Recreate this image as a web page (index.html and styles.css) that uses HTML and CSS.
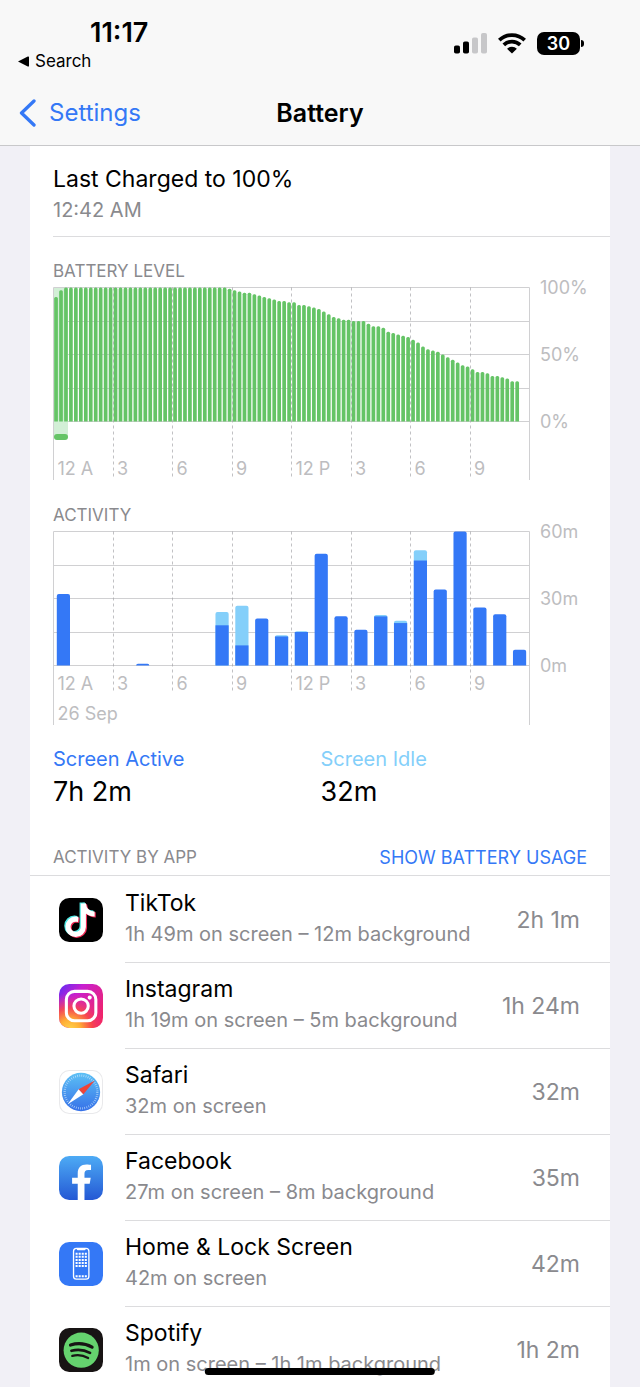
FILE: index.html
```
<!DOCTYPE html>
<html lang="en">
<head>
<meta charset="utf-8">
<meta name="viewport" content="width=device-width, initial-scale=1">
<title>Battery</title>
<link rel="stylesheet" href="styles.css">
</head>
<body>
<header class="top">
  <div class="status">
    <div class="status-left">
      <time class="clock">11:17</time>
      <a class="return" href="#"><svg width="11" height="11" viewBox="0 0 11 11" aria-hidden="true"><path d="M0 5.500L9.800.6Q11 0 11 1.300V9.700Q11 11 9.800 10.400Z"/></svg>Search</a>
    </div>
    <div class="status-right">
      <svg width="33" height="21" viewBox="0 0 33 21" role="img" aria-label="Signal"><rect y="12.500" width="6" height="8" rx="1.800"/><rect x="9" y="8.500" width="6" height="12" rx="1.800"/><g fill="#c7c7c9"><rect x="18" y="4.500" width="6" height="16" rx="1.800"/><rect x="27" width="6" height="20.500" rx="1.800"/></g></svg>
      <svg width="28" height="21" viewBox="0 0 28 21" role="img" aria-label="Wi-Fi"><g fill="none" stroke="#000" stroke-width="3.700"><path d="M1.300 7.200A18.200 18.200 0 0 1 26.700 7.200"/><path d="M5.800 11.900A11.700 11.700 0 0 1 22.200 11.900"/></g><path d="M14 20.600L9.100 15.800A7 7 0 0 1 18.900 15.800Z"/></svg>
      <span class="battery"><span class="battery-body">30</span><span class="battery-tip"></span></span>
    </div>
  </div>
  <nav class="nav">
    <a class="back" href="#"><svg width="17" height="28" viewBox="0 0 17 28" aria-hidden="true"><path d="M15 2L2.500 14L15 26" fill="none" stroke="#3478f6" stroke-width="3.300" stroke-linecap="round" stroke-linejoin="round"/></svg>Settings</a>
    <h1>Battery</h1>
  </nav>
</header>

<main class="scroll">
  <div class="card">
    <section class="charged">
      <h2>Last Charged to 100%</h2>
      <p>12:42 AM</p>
    </section>

    <section class="chart">
      <h3>BATTERY LEVEL</h3>
      <svg id="level" viewBox="0 0 557 200" role="img" aria-label="Battery level over the day"></svg>
    </section>
    <section class="chart activity">
      <h3>ACTIVITY</h3>
      <svg id="activity" viewBox="0 0 557 200" role="img" aria-label="Screen activity over the day"></svg>
    </section>

    <dl class="totals">
      <div><dt class="active">Screen Active</dt><dd>7h 2m</dd></div>
      <div><dt class="idle">Screen Idle</dt><dd>32m</dd></div>
    </dl>

    <section>
      <div class="apps-head">
        <h3>ACTIVITY BY APP</h3>
        <button type="button">SHOW BATTERY USAGE</button>
      </div>
      <ul class="apps">
        <li>
          <svg class="icon" viewBox="0 0 43 43" aria-hidden="true"><rect width="43" height="43" rx="10"/><g fill="none" stroke-width="5"><path stroke="#4de8e4" d="M23.500 5V28A7.500 7.500 0 1 1 16 20.300L18.500 20.600M23.500 5C24 11 28 15.300 34.500 15.300" transform="translate(-.9 -.6)"/><path stroke="#f02b56" d="M23.500 5V28A7.500 7.500 0 1 1 16 20.300L18.500 20.600M23.500 5C24 11 28 15.300 34.500 15.300" transform="translate(1.400 1.200)"/><path stroke="#fff" d="M23.500 5V28A7.500 7.500 0 1 1 16 20.300L18.500 20.600M23.500 5C24 11 28 15.300 34.500 15.300" transform="translate(.3 .3)"/></g></svg>
          <div class="row"><div class="info"><h4>TikTok</h4><p>1h 49m on screen – 12m background</p></div><span class="time">2h 1m</span></div>
        </li>
        <li>
          <svg class="icon" viewBox="0 0 43 43" aria-hidden="true"><defs><linearGradient id="igBase" x1="0" y1="0" x2="1" y2=".8"><stop offset="0" stop-color="#5b2cf5"/><stop offset=".35" stop-color="#c81fd0"/><stop offset="1" stop-color="#f5245c"/></linearGradient><radialGradient id="igGlow" cx=".25" cy="1.050" r=".85"><stop offset="0" stop-color="#ffd84d"/><stop offset=".3" stop-color="#ffab35"/><stop offset=".6" stop-color="#fa4a45" stop-opacity=".85"/><stop offset="1" stop-color="#e32aa0" stop-opacity="0"/></radialGradient></defs><rect width="43" height="43" rx="10" fill="url(#igBase)"/><rect width="43" height="43" rx="10" fill="url(#igGlow)"/><g fill="none" stroke="#fff" stroke-width="3"><rect x="7.200" y="7.200" width="28.800" height="28.800" rx="8"/><circle cx="21.600" cy="21.600" r="7"/></g><circle cx="30" cy="13.300" r="2" fill="#fff"/></svg>
          <div class="row"><div class="info"><h4>Instagram</h4><p>1h 19m on screen – 5m background</p></div><span class="time">1h 24m</span></div>
        </li>
        <li>
          <svg class="icon" viewBox="0 0 43 43" aria-hidden="true"><defs><linearGradient id="sf" x2="0" y2="1"><stop stop-color="#5cc0f5"/><stop offset="1" stop-color="#3671e8"/></linearGradient></defs><rect x=".5" y=".5" width="42" height="42" rx="9.500" fill="#fff" stroke="#e9e9eb"/><circle cx="21.500" cy="21.500" r="18.700" fill="url(#sf)"/><circle cx="21.500" cy="21.500" r="16" fill="none" stroke="#d5ebff" stroke-opacity=".75" stroke-width="2.200" stroke-dasharray=".7 1.394"/><path fill="#fff" d="M8.500 33.500L19.200 18.800L23.800 23.700Z"/><path fill="#f04438" d="M35 10.300L19.200 18.800L23.800 23.700Z"/></svg>
          <div class="row"><div class="info"><h4>Safari</h4><p>32m on screen</p></div><span class="time">32m</span></div>
        </li>
        <li>
          <svg class="icon" viewBox="0 0 43 43" aria-hidden="true"><defs><linearGradient id="fb" x2="0" y2="1"><stop stop-color="#4dabf5"/><stop offset="1" stop-color="#2458d4"/></linearGradient></defs><rect width="43" height="43" rx="10" fill="url(#fb)"/><path fill="#fff" d="M18.300 43V27H12.800V21.300H18.300V17C18.300 11 21.500 8.200 26.800 8.200C28.800 8.200 30.500 8.400 31.300 8.600V13.600H28.500C25.800 13.600 24.900 14.900 24.900 17.300V21.300H31L30 27H24.900V43Z"/></svg>
          <div class="row"><div class="info"><h4>Facebook</h4><p>27m on screen – 8m background</p></div><span class="time">35m</span></div>
        </li>
        <li>
          <svg class="icon" viewBox="0 0 43 43" aria-hidden="true"><rect width="43" height="43" rx="10" fill="#3478f6"/><rect x="14.200" y="6.300" width="15" height="30" rx="2.800" fill="none" stroke="#fff" stroke-width="1.300"/><path fill="#fff" d="M17.300 6h8.800v.8q0 1.200-1.200 1.200h-6.400q-1.200 0-1.200-1.200z"/><g stroke="#fff" stroke-width="2" stroke-dasharray="2 1"><path d="M16.200 11.500h11M16.200 14.500h11M16.200 17.500h11M16.200 20.500h11M16.200 23.500h11M16.200 33.500h11"/></g></svg>
          <div class="row"><div class="info"><h4>Home &amp; Lock Screen</h4><p>42m on screen</p></div><span class="time">42m</span></div>
        </li>
        <li>
          <svg class="icon" viewBox="0 0 43 43" aria-hidden="true"><rect width="43" height="43" rx="10" fill="#181414"/><circle cx="21.700" cy="21.700" r="17.200" fill="#65d36e"/><g fill="none" stroke="#181414" stroke-linecap="round"><path d="M11.300 16.600Q22.500 13.300 32.300 18.700" stroke-width="3.200"/><path d="M12.200 22.200Q21.800 19.600 30.300 24.300" stroke-width="2.700"/><path d="M13 27.300Q21 25.200 28.500 29.300" stroke-width="2.200"/></g></svg>
          <div class="row"><div class="info"><h4>Spotify</h4><p>1m on screen – 1h 1m background</p></div><span class="time">1h 2m</span></div>
        </li>
      </ul>
    </section>
  </div>
</main>
<div class="home-bar"></div>
<script src="charts.js"></script>
</body>
</html>
```

FILE: styles.css
```
* {
  box-sizing: border-box;
}

body {
  margin: 0;
  height: 100vh;
  display: flex;
  flex-direction: column;
  overflow: hidden;
  background: #f1f0f6;
  color: #000;
  font-family: Inter, "Liberation Sans", sans-serif;
}

h1, h2, h3, h4, p, dl, dd, ul {
  margin: 0;
  padding: 0;
  font-weight: 400;
}

a {
  color: inherit;
  text-decoration: none;
}

svg {
  display: block;
}

.top {
  flex: none;
  background: #f8f8f8;
  border-bottom: 1px solid #c8c8ca;
}

.status {
  display: flex;
  justify-content: space-between;
  padding: 18px 56px 0 18px;
  height: 80px;
}

.status-left {
  display: flex;
  flex-direction: column;
}

.clock {
  padding-left: 72px;
  font-size: 27px;
  font-weight: 600;
  line-height: 30px;
}

.return {
  display: flex;
  align-items: center;
  gap: 6px;
  font-size: 17px;
  font-weight: 400;
  line-height: 26px;
}

.status-right {
  display: flex;
  align-items: center;
  gap: 11px;
  height: 50px;
}

.battery {
  display: flex;
  align-items: center;
  gap: 1px;
}

.battery-body {
  width: 43px;
  border-radius: 7px;
  background: #000;
  color: #fff;
  font-size: 18px;
  font-weight: 600;
  line-height: 23px;
  text-align: center;
}

.battery-tip {
  width: 3px;
  height: 7px;
  border-radius: 0 3px 3px 0;
  background: #000;
}

.nav {
  display: grid;
  grid-template-columns: 1fr auto 1fr;
  align-items: center;
  height: 65px;
  padding: 0 19px;
}

.back {
  display: flex;
  align-items: center;
  gap: 13px;
  color: #3478f6;
  font-size: 24px;
}

.nav h1 {
  font-size: 25px;
  font-weight: 600;
}

.scroll {
  flex: 1;
  min-height: 0;
  overflow-y: auto;
  scrollbar-width: none;
  padding: 0 30px;
}

.card {
  background: #fff;
}

.charged {
  margin-left: 23px;
  padding: 17px 0 10px;
  border-bottom: 1px solid #dcdcde;
}

.charged h2 {
  font-size: 23px;
  line-height: 32px;
}

.charged p {
  color: #8a8a8e;
  font-size: 20px;
  line-height: 31px;
}

.chart {
  padding: 24px 0 0 23px;
}

.chart.activity {
  padding-top: 23px;
}

h3 {
  color: #8a8a8e;
  font-size: 17px;
  line-height: 21px;
}

.chart svg {
  width: 100%;
  overflow: visible;
}

.chart text {
  fill: #bdbdc0;
  font-size: 18px;
}

.grid {
  stroke: #d0d0d2;
}

.hour {
  stroke: #a0a0a4;
  stroke-opacity: 0.65;
  stroke-dasharray: 3 3;
}

.level-bar {
  fill: #65c466;
}

.charging {
  fill: #d2efd6;
}

.active-bar {
  fill: #3478f6;
}

.idle-bar {
  fill: #84cffa;
}

.totals {
  display: grid;
  grid-template-columns: 1fr 1fr;
  padding: 18px 22px 0 23px;
}

.totals dt {
  font-size: 20px;
  line-height: 30px;
}

.totals dd {
  font-size: 27px;
  line-height: 36px;
}

.active {
  color: #3478f6;
}

.idle {
  color: #84cffa;
}

.apps-head {
  display: flex;
  justify-content: space-between;
  align-items: center;
  margin-top: 30px;
  padding: 0 23px 0 23px;
  height: 36px;
  border-bottom: 1px solid #dcdcde;
}

.apps-head button {
  padding: 0;
  border: 0;
  background: none;
  color: #3478f6;
  font: inherit;
  font-size: 18px;
}

.apps {
  padding-top: 1px;
  list-style: none;
}

.apps li {
  display: flex;
  align-items: center;
  gap: 22px;
  padding-left: 29px;
}

.icon {
  flex: none;
  width: 44px;
  height: 44px;
}

.row {
  flex: 1;
  display: flex;
  align-items: center;
  justify-content: space-between;
  height: 86px;
  padding-right: 30px;
  border-bottom: 1px solid #dcdcde;
}

.info {
  padding-bottom: 4px;
}

.info h4 {
  font-size: 23px;
  line-height: 32px;
}

.info p {
  color: #8a8a8e;
  font-size: 20px;
  line-height: 30px;
}

.time {
  color: #8a8a8e;
  font-size: 23px;
}

.home-bar {
  position: fixed;
  bottom: 12px;
  left: 50%;
  width: 36%;
  height: 7px;
  border-radius: 4px;
  background: #000;
  transform: translateX(-50%);
}
```

FILE: charts.js
```
const NS = "http://www.w3.org/2000/svg";
const LEFT = 0.5, RIGHT = 476.5, TOP = 5.5, BASE = 139.5;
const SPAN = RIGHT - LEFT, RISE = BASE - TOP;

function add(svg, tag, attrs, text) {
  const el = document.createElementNS(NS, tag);
  for (const key in attrs) el.setAttribute(key, attrs[key]);
  if (text) el.textContent = text;
  svg.appendChild(el);
}

function line(svg, cls, x1, y1, x2, y2) {
  add(svg, "line", { class: cls, x1, y1, x2, y2 });
}

function drawGrid(svg, axisEnd) {
  for (let i = 0; i < 5; i++) {
    const y = Math.floor(TOP + RISE * i / 4) + 0.5;
    line(svg, "grid", LEFT, y, RIGHT, y);
  }
  line(svg, "grid", LEFT, TOP, LEFT, axisEnd);
  line(svg, "grid", RIGHT, TOP, RIGHT, axisEnd);
}

function drawHours(svg, end, baseline) {
  ["12 A", "3", "6", "9", "12 P", "3", "6", "9"].forEach((label, i) => {
    const x = LEFT + SPAN * i / 8;
    if (i) line(svg, "hour", Math.floor(x) + 0.5, TOP, Math.floor(x) + 0.5, end);
    add(svg, "text", { x: x + 4, y: baseline }, label);
  });
}

function drawScale(svg, labels) {
  labels.forEach((label, i) => add(svg, "text", { x: 487, y: TOP + RISE * i / 2 + 6 }, label));
}

const levels = [93, 98, ...Array(33).fill(100),
  99, 98, 97, 96, 96, 95, 94, 93, 92, 91, 90, 90, 89, 89, 87, 87, 86, 85, 84, 82, 80, 78, 77, 76, 76,
  75, 75, 75, 73, 71, 71, 70, 67, 66, 65, 64, 63, 61, 59, 56, 54, 53, 52, 50, 48, 46, 44, 42, 41,
  39, 37, 37, 36, 34, 34, 33, 32, 30, 30];

const level = document.getElementById("level");
drawGrid(level, 198);
add(level, "rect", { class: "charging", x: 1, y: 6, width: 14, height: 149 });
levels.forEach((value, i) => {
  const x = LEFT + 0.7 + i * SPAN / 96;
  const y = BASE - RISE * value / 100;
  add(level, "path", { class: "level-bar", d: `M${x} ${BASE}V${y + 1.5}q0-1.500 1.500-1.500h.7q1.500 0 1.500 1.500V${BASE}Z` });
});
add(level, "rect", { class: "level-bar", x: 1, y: 152, width: 14, height: 6, rx: 3 });
drawHours(level, 197, 193);
drawScale(level, ["100%", "50%", "0%"]);

// Minutes per hour: [screen active, screen idle]
const minutes = [[32, 0], [0, 0], [0, 0], [0, 0], [0.8, 0], [0, 0], [0, 0], [0, 0], [18, 6], [9, 17.7],
  [21, 0], [13, 0.5], [15, 0.3], [50, 0], [22, 0], [16, 0], [22, 0.6], [19, 1], [47, 4.6], [34, 0],
  [60, 0], [26, 0], [23, 0], [7, 0]];

const activity = document.getElementById("activity");
drawGrid(activity, 199);
drawHours(activity, 166, 164);
minutes.forEach(([on, idle], i) => {
  if (!on) return;
  const x = LEFT + 3.3 + i * SPAN / 24;
  const scale = RISE / 60;
  const y = BASE - (on + idle) * scale;
  const r = Math.min(2, on * scale);
  add(activity, "path", { class: idle ? "idle-bar" : "active-bar", d: `M${x} ${BASE}V${y + r}q0-${r} ${r}-${r}h${13.2 - 2 * r}q${r} 0 ${r} ${r}V${BASE}Z` });
  if (idle) add(activity, "rect", { class: "active-bar", x, y: BASE - on * scale, width: 13.2, height: on * scale });
});
add(activity, "text", { x: LEFT + 4, y: 194 }, "26 Sep");
drawScale(activity, ["60m", "30m", "0m"]);
```
